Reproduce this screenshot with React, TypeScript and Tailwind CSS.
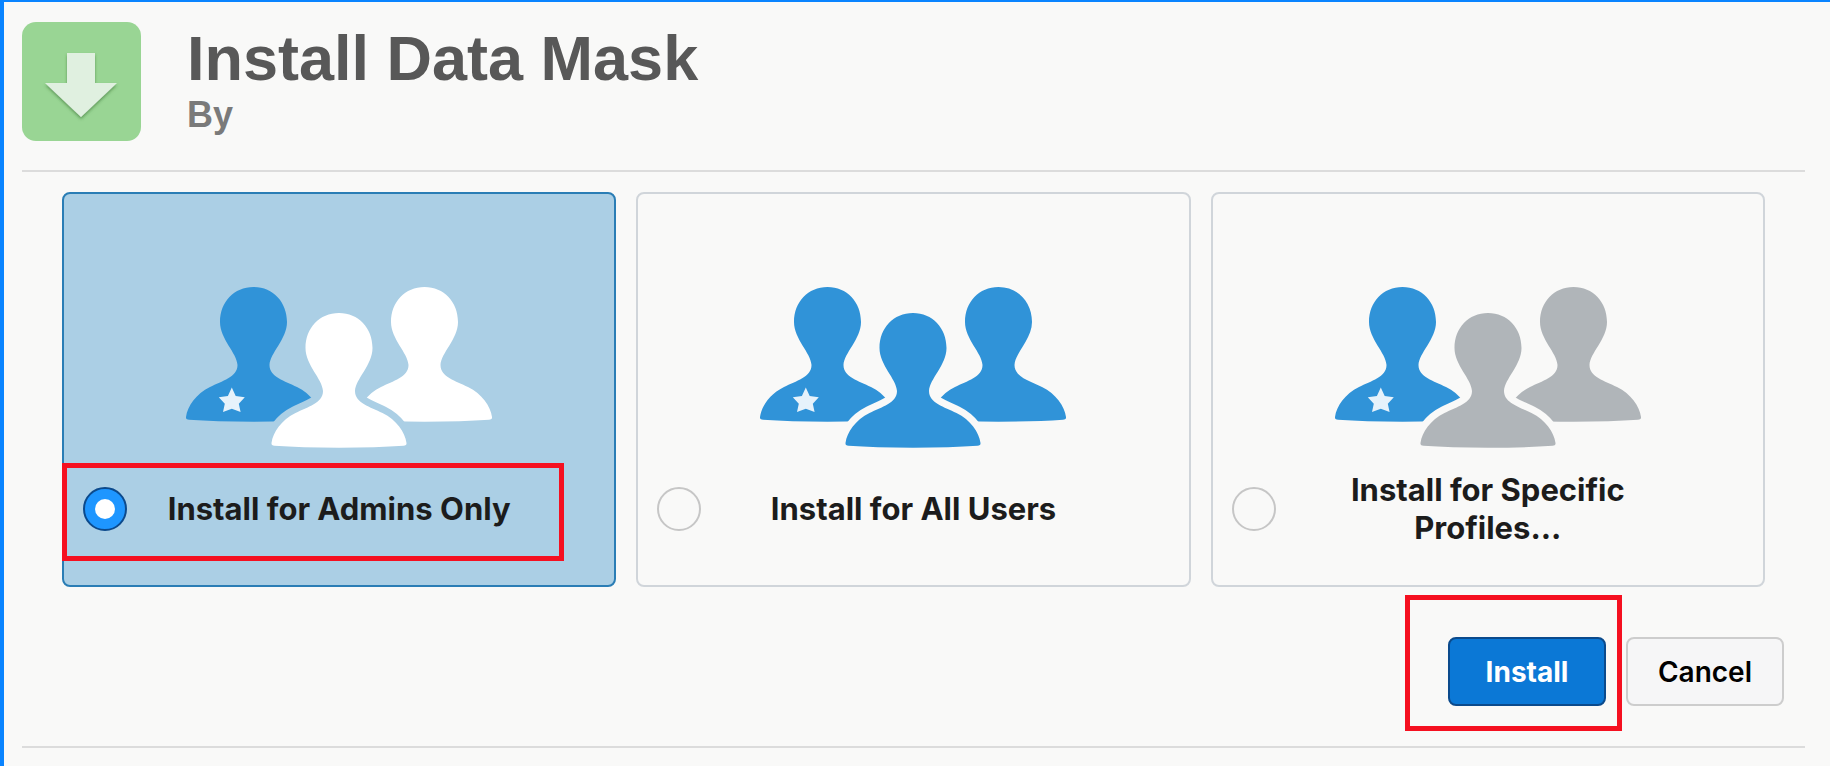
import { useState } from "react";

const PERSON =
  "M67.5 0C48 0 34 15 34 35C34 52 51 66 51.5 78C51.5 90 36 94 24 100C10 107 1.5 119 0 130C-0.3 132 1 132.6 3 132.8Q30 134.7 67.5 134.7Q105 134.7 132 132.8C134 132.6 135.3 132 135 130C133.5 119 125 107 111 100C99 94 83.5 90 83.5 78C84 66 101 52 101 35C101 15 87 0 67.5 0Z";

type Option = {
  id: string;
  label: string;
  others: string;
};

const OPTIONS: Option[] = [
  { id: "admins", label: "Install for Admins Only", others: "#ffffff" },
  { id: "all", label: "Install for All Users", others: "#3093d8" },
  { id: "profiles", label: "Install for Specific Profiles...", others: "#b0b5b9" },
];

function People({ id, others }: { id: string; others: string }) {
  return (
    <svg viewBox="0 0 306 161" className="h-[161px] w-[306px] self-center" aria-hidden="true">
      <mask id={`gap-${id}`} maskUnits="userSpaceOnUse" x="0" y="0" width="306" height="161">
        <rect width="306" height="161" fill="#fff" />
        <path d={PERSON} transform="translate(85.5 26)" fill="#000" stroke="#000" strokeWidth="14" />
      </mask>
      <g mask={`url(#gap-${id})`}>
        <path d={PERSON} fill="#3093d8" />
        <path d={PERSON} transform="translate(171 0)" fill={others} />
      </g>
      <path d={PERSON} transform="translate(85.5 26)" fill={others} />
      <path
        d="M45.8 100.5L49.7 109L58.8 110.3L52.8 116.8L54.6 125L45.8 121.8L37 125L38.8 116.8L32.8 110.3L41.9 109Z"
        fill="#e6f2fb"
      />
    </svg>
  );
}

function DownloadBadge() {
  return (
    <svg viewBox="0 0 119 119" className="size-[119px] shrink-0" aria-hidden="true">
      <defs>
        <filter id="arrow-shadow" x="-20%" y="-20%" width="140%" height="140%">
          <feDropShadow dx="0" dy="2" stdDeviation="1.8" floodColor="#2f6b2c" floodOpacity="0.55" />
        </filter>
      </defs>
      <rect width="119" height="119" rx="14" fill="#99d594" />
      <path d="M45 31H73V61H95L59 95L23 61H45Z" fill="#e0f0e0" filter="url(#arrow-shadow)" />
    </svg>
  );
}

export default function App() {
  const [selected, setSelected] = useState("admins");

  return (
    <main className="min-h-screen border-t-2 border-l-4 border-[#0a84ff] bg-[#f9f9f8] pr-[25px] pl-[18px] font-['Inter',sans-serif]">
      <header className="flex gap-[46px] border-b-2 border-[#dcdcdc] pt-5 pb-[29px]">
        <DownloadBadge />
        <div className="font-['Liberation_Sans',Arial,sans-serif] font-bold">
          <h1 className="text-[63px] leading-[72px] text-[#585858]">Install Data Mask</h1>
          <p className="text-[36px] leading-[42px] text-[#7a7a7a]">By</p>
        </div>
      </header>

      <form className="border-b-2 border-[#dcdcdc] pt-5 pb-10" onSubmit={(e) => e.preventDefault()}>
        <fieldset aria-label="Install options" className="mx-10 grid grid-cols-3 gap-5">
          {OPTIONS.map((option) => {
            const active = option.id === selected;
            return (
              <label
                key={option.id}
                htmlFor={option.id}
                className={`relative flex cursor-pointer flex-col gap-[23px] rounded-lg border-2 px-[19px] pt-[93px] pb-[38px] ${
                  active ? "border-[#2a7db5] bg-[#abcfe5]" : "border-[#d0d5da]"
                }`}
              >
                <People id={option.id} others={option.others} />
                <span className="grid min-h-[76px] grid-cols-[44px_1fr_44px] items-center">
                  <input
                    type="radio"
                    name="audience"
                    id={option.id}
                    checked={active}
                    onChange={() => setSelected(option.id)}
                    className="grid size-11 appearance-none place-items-center rounded-full border-2 border-[#c6c6c6] before:size-5 before:rounded-full checked:border-[#0c4a8c] checked:bg-[#1e96ff] checked:before:bg-white"
                  />
                  <span className="px-6 text-center text-[31px] leading-[38px] font-bold text-[#1c1c1c]">
                    {option.label}
                  </span>
                </span>
                {option.id === "admins" && (
                  <span className="pointer-events-none absolute bottom-6 -left-0.5 h-[98px] w-[502px] border-5 border-[#f51020]" />
                )}
              </label>
            );
          })}
        </fieldset>

        <div className="mt-[50px] flex justify-end gap-5 pr-[21px]">
          <div className="relative">
            <button
              type="submit"
              className="h-[69px] w-[158px] rounded-lg border-2 border-[#0b4a8c] bg-[#0b78d6] text-[28px] font-bold text-white"
            >
              Install
            </button>
            <span className="pointer-events-none absolute -top-[42px] -right-4 h-[136px] w-[217px] border-5 border-[#f51020]" />
          </div>
          <button
            type="button"
            className="h-[69px] w-[158px] rounded-lg border-2 border-[#cdcdcd] bg-[#f6f6f7] text-[28px] font-semibold text-black"
          >
            Cancel
          </button>
        </div>
      </form>
    </main>
  );
}
